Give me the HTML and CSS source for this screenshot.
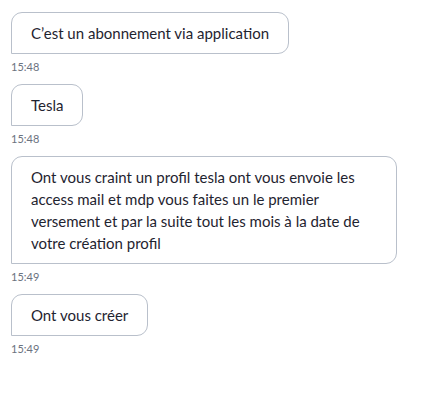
FILE: index.html
```html
<!DOCTYPE html>
<html lang="fr">
<head>
    <meta charset="UTF-8">
    <meta name="viewport" content="width=device-width, initial-scale=1.0">
    <title>Messages</title>
    <link rel="stylesheet" href="styles.css">
</head>
<body>
    <div class="chat">
        <!-- Message list -->
        <div class="message">
            <div class="bubble">C’est un abonnement via application</div>
            <div class="time">15:48</div>
        </div>
        <div class="message">
            <div class="bubble">Tesla</div>
            <div class="time">15:48</div>
        </div>
        <div class="message">
            <div class="bubble">Ont vous craint un profil tesla ont vous envoie les access mail et mdp vous faites un le premier versement et par la suite tout les mois à la date de votre création profil</div>
            <div class="time">15:49</div>
        </div>
        <div class="message">
            <div class="bubble">Ont vous créer</div>
            <div class="time">15:49</div>
        </div>
    </div>
</body>
</html>
```

FILE: styles.css
```css
body {
    margin: 0;
    background: #ffffff;
    font-family: Lato, "Noto Sans", sans-serif;
    color: #1f2430;
}

/* Chat column */
.chat {
    display: flex;
    flex-direction: column;
    align-items: flex-start;
    padding: 12px 11px;
}

.message {
    display: flex;
    flex-direction: column;
    align-items: flex-start;
    margin-bottom: 9px;
}

/* Bubble */
.bubble {
    box-sizing: border-box;
    max-width: 386px;
    padding: 9px 19px;
    border: 1px solid #b9c0cb;
    border-radius: 11px 11px 11px 0;
    font-size: 15px;
    line-height: 22px;
}

.time {
    margin-top: 5px;
    font-size: 11px;
    line-height: 16px;
    color: #6b7280;
}
```
